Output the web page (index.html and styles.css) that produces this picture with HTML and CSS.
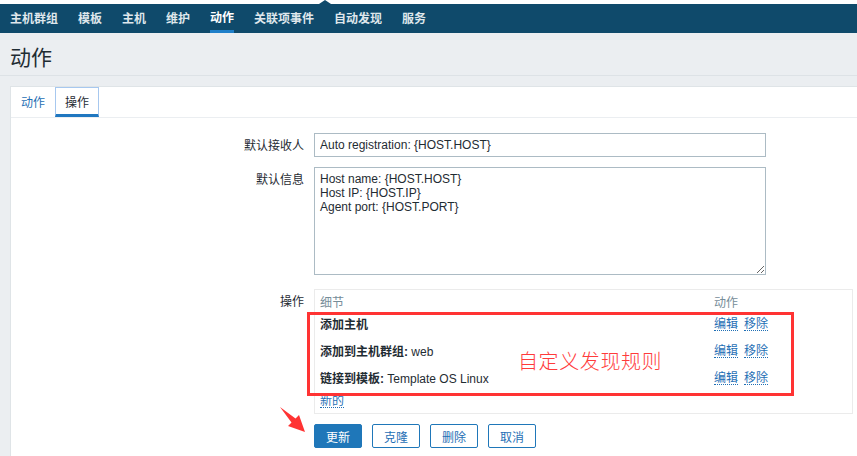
FILE: index.html
```html
<!DOCTYPE html>
<html lang="zh">
<head>
<meta charset="utf-8">
<title>动作</title>
<link rel="stylesheet" href="styles.css">
</head>
<body>
<div class="topgap"><span class="notch"></span></div>
<nav class="topnav">
  <a class="nav-item">主机群组</a>
  <a class="nav-item">模板</a>
  <a class="nav-item">主机</a>
  <a class="nav-item">维护</a>
  <a class="nav-item selected">动作</a>
  <a class="nav-item">关联项事件</a>
  <a class="nav-item">自动发现</a>
  <a class="nav-item">服务</a>
</nav>
<header class="page-title"><h1>动作</h1></header>
<main class="card">
  <div class="tabs">
    <a class="tab">动作</a>
    <a class="tab active">操作</a>
  </div>
  <form class="form">
    <label class="label">默认接收人</label>
    <div class="field"><input class="input" type="text" value="Auto registration: {HOST.HOST}"></div>
    <label class="label">默认信息</label>
    <div class="field"><textarea class="textarea">Host name: {HOST.HOST}
Host IP: {HOST.IP}
Agent port: {HOST.PORT}</textarea></div>
    <label class="label">操作</label>
    <div class="field">
      <div class="ops">
        <div class="ops-row head"><span>细节</span><span>动作</span></div>
        <div class="ops-row item"><span><b>添加主机</b></span><span class="acts"><a class="link">编辑</a><a class="link">移除</a></span></div>
        <div class="ops-row item"><span><b>添加到主机群组:</b> web</span><span class="acts"><a class="link">编辑</a><a class="link">移除</a></span></div>
        <div class="ops-row item"><span><b>链接到模板:</b> Template OS Linux</span><span class="acts"><a class="link">编辑</a><a class="link">移除</a></span></div>
        <div class="ops-row new"><a class="link">新的</a></div>
      </div>
    </div>
    <div class="label"></div>
    <div class="buttons">
      <button type="button" class="btn primary">更新</button>
      <button type="button" class="btn">克隆</button>
      <button type="button" class="btn">删除</button>
      <button type="button" class="btn">取消</button>
    </div>
  </form>
</main>
<div class="annot-box"></div>
<div class="annot-text">自定义发现规则</div>
<svg class="annot-arrow" width="40" height="40" viewBox="0 0 40 40">
  <polygon points="0,0 15.5,11.5 19,8 25,25 8,19 11.5,15.5" fill="#f33"/>
</svg>
</body>
</html>
```
FILE: styles.css
```css
* { box-sizing: border-box; }
html, body { margin: 0; padding: 0; }
body {
  width: 857px;
  height: 456px;
  overflow: hidden;
  background: #ebeef1;
  font-family: "Liberation Sans", Arial, "Noto Sans CJK SC", sans-serif;
  font-size: 12px;
  color: #1f2c33;
  position: relative;
}
.topgap { height: 4px; background: #fff; position: relative; }
.notch {
  position: absolute;
  left: 319px;
  top: 0;
  width: 0; height: 0;
  border-left: 6px solid transparent;
  border-right: 6px solid transparent;
  border-bottom: 4px solid #0f4a6b;
}
.topnav {
  height: 29px;
  background: #0f4a6b;
  display: flex;
  gap: 20px;
  padding-left: 10px;
}
.nav-item {
  font-family: "Noto Sans CJK SC", sans-serif;
  font-weight: 700;
  font-size: 12px;
  color: #dfe7ec;
  line-height: 28px;
  height: 29px;
  border-bottom: 3px solid transparent;
}
.nav-item.selected { color: #fff; border-bottom-color: #1f7fc9; line-height: 26px; }
.page-title {
  height: 43px;
  padding: 4px 10px 0;
  border-bottom: 1px solid #dde2e6;
  display: flex;
  align-items: center;
}
.page-title h1 {
  margin: 0;
  font-family: "Noto Sans CJK SC", sans-serif;
  font-weight: 400;
  font-size: 21px;
  color: #1f2c33;
}
.card {
  margin: 10px 0 0 10px;
  background: #fff;
  border-top: 1px solid #dfe4e7;
  border-left: 1px solid #dfe4e7;
  height: 370px;
}
.tabs {
  display: flex;
  height: 31px;
  border-bottom: 1px solid #ebeef1;
  font-family: "Noto Sans CJK SC", sans-serif;
}
.tab {
  padding: 0 10px;
  height: 30px;
  line-height: 29px;
  color: #1f6fb5;
}
.tab.active {
  color: #1f2c33;
  border: 1px solid #a7c8ef;
  border-bottom: 3px solid #1f77c0;
  line-height: 27px;
  padding: 0 9px;
}
.form {
  display: grid;
  grid-template-columns: 293px 539px;
  column-gap: 10px;
  padding-top: 15px;
}
.label {
  text-align: right;
  padding-top: 5px;
  line-height: 14px;
  font-family: "Noto Sans CJK SC", sans-serif;
  color: #1f2c33;
}
.field { margin-bottom: 10px; }
.input {
  display: block;
  width: 452px;
  height: 24px;
  border: 1px solid #acbbc4;
  padding: 0 5px;
  font-family: "Liberation Sans", Arial, sans-serif;
  font-size: 12px;
  color: #1f2c33;
  background: #fff;
  margin: 0;
}
.textarea {
  display: block;
  width: 452px;
  height: 108px;
  border: 1px solid #acbbc4;
  padding: 4px 5px;
  font-family: "Liberation Sans", Arial, sans-serif;
  font-size: 12px;
  line-height: 14px;
  color: #1f2c33;
  resize: both;
  margin: 0 0 4px;
}
.ops {
  width: 539px;
  border: 1px solid #ebebeb;
  padding: 2px 5px 4px;
  font-family: "Liberation Sans", Arial, "Noto Sans CJK SC", sans-serif;
}
.ops-row {
  display: grid;
  grid-template-columns: 394px auto;
  align-items: center;
}
.ops-row.head { height: 18px; color: #768d99; font-family: "Noto Sans CJK SC", sans-serif; }
.ops-row.item { height: 27px; }
.ops-row.new { height: 18px; display: flex; }
.ops b { font-weight: 700; font-family: "Liberation Sans", Arial, "Noto Sans CJK SC", sans-serif; }
.acts { display: flex; gap: 6px; }
.link {
  color: #1f6fb5;
  font-family: "Noto Sans CJK SC", sans-serif;
  border-bottom: 1px dotted #1f6fb5;
  line-height: 14px;
}
.buttons {
  display: flex;
  gap: 10px;
}
.btn {
  width: 48px;
  height: 24px;
  border: 1px solid #1f77b9;
  border-radius: 2px;
  background: #fff;
  color: #1f6fb5;
  font-family: "Noto Sans CJK SC", sans-serif;
  font-size: 12px;
  padding: 0;
  margin: 0;
}
.btn.primary { background: #1f77b9; color: #fff; }
.annot-box {
  position: absolute;
  left: 307px;
  top: 312px;
  width: 487px;
  height: 84px;
  border: 3px solid #f33;
}
.annot-text {
  position: absolute;
  left: 518px;
  top: 348px;
  font-family: "Noto Sans CJK SC", sans-serif;
  font-weight: 300;
  font-size: 20px;
  letter-spacing: 0.6px;
  line-height: 26px;
  color: #ff3b3b;
}
.annot-arrow {
  position: absolute;
  left: 280px;
  top: 407px;
}
```
